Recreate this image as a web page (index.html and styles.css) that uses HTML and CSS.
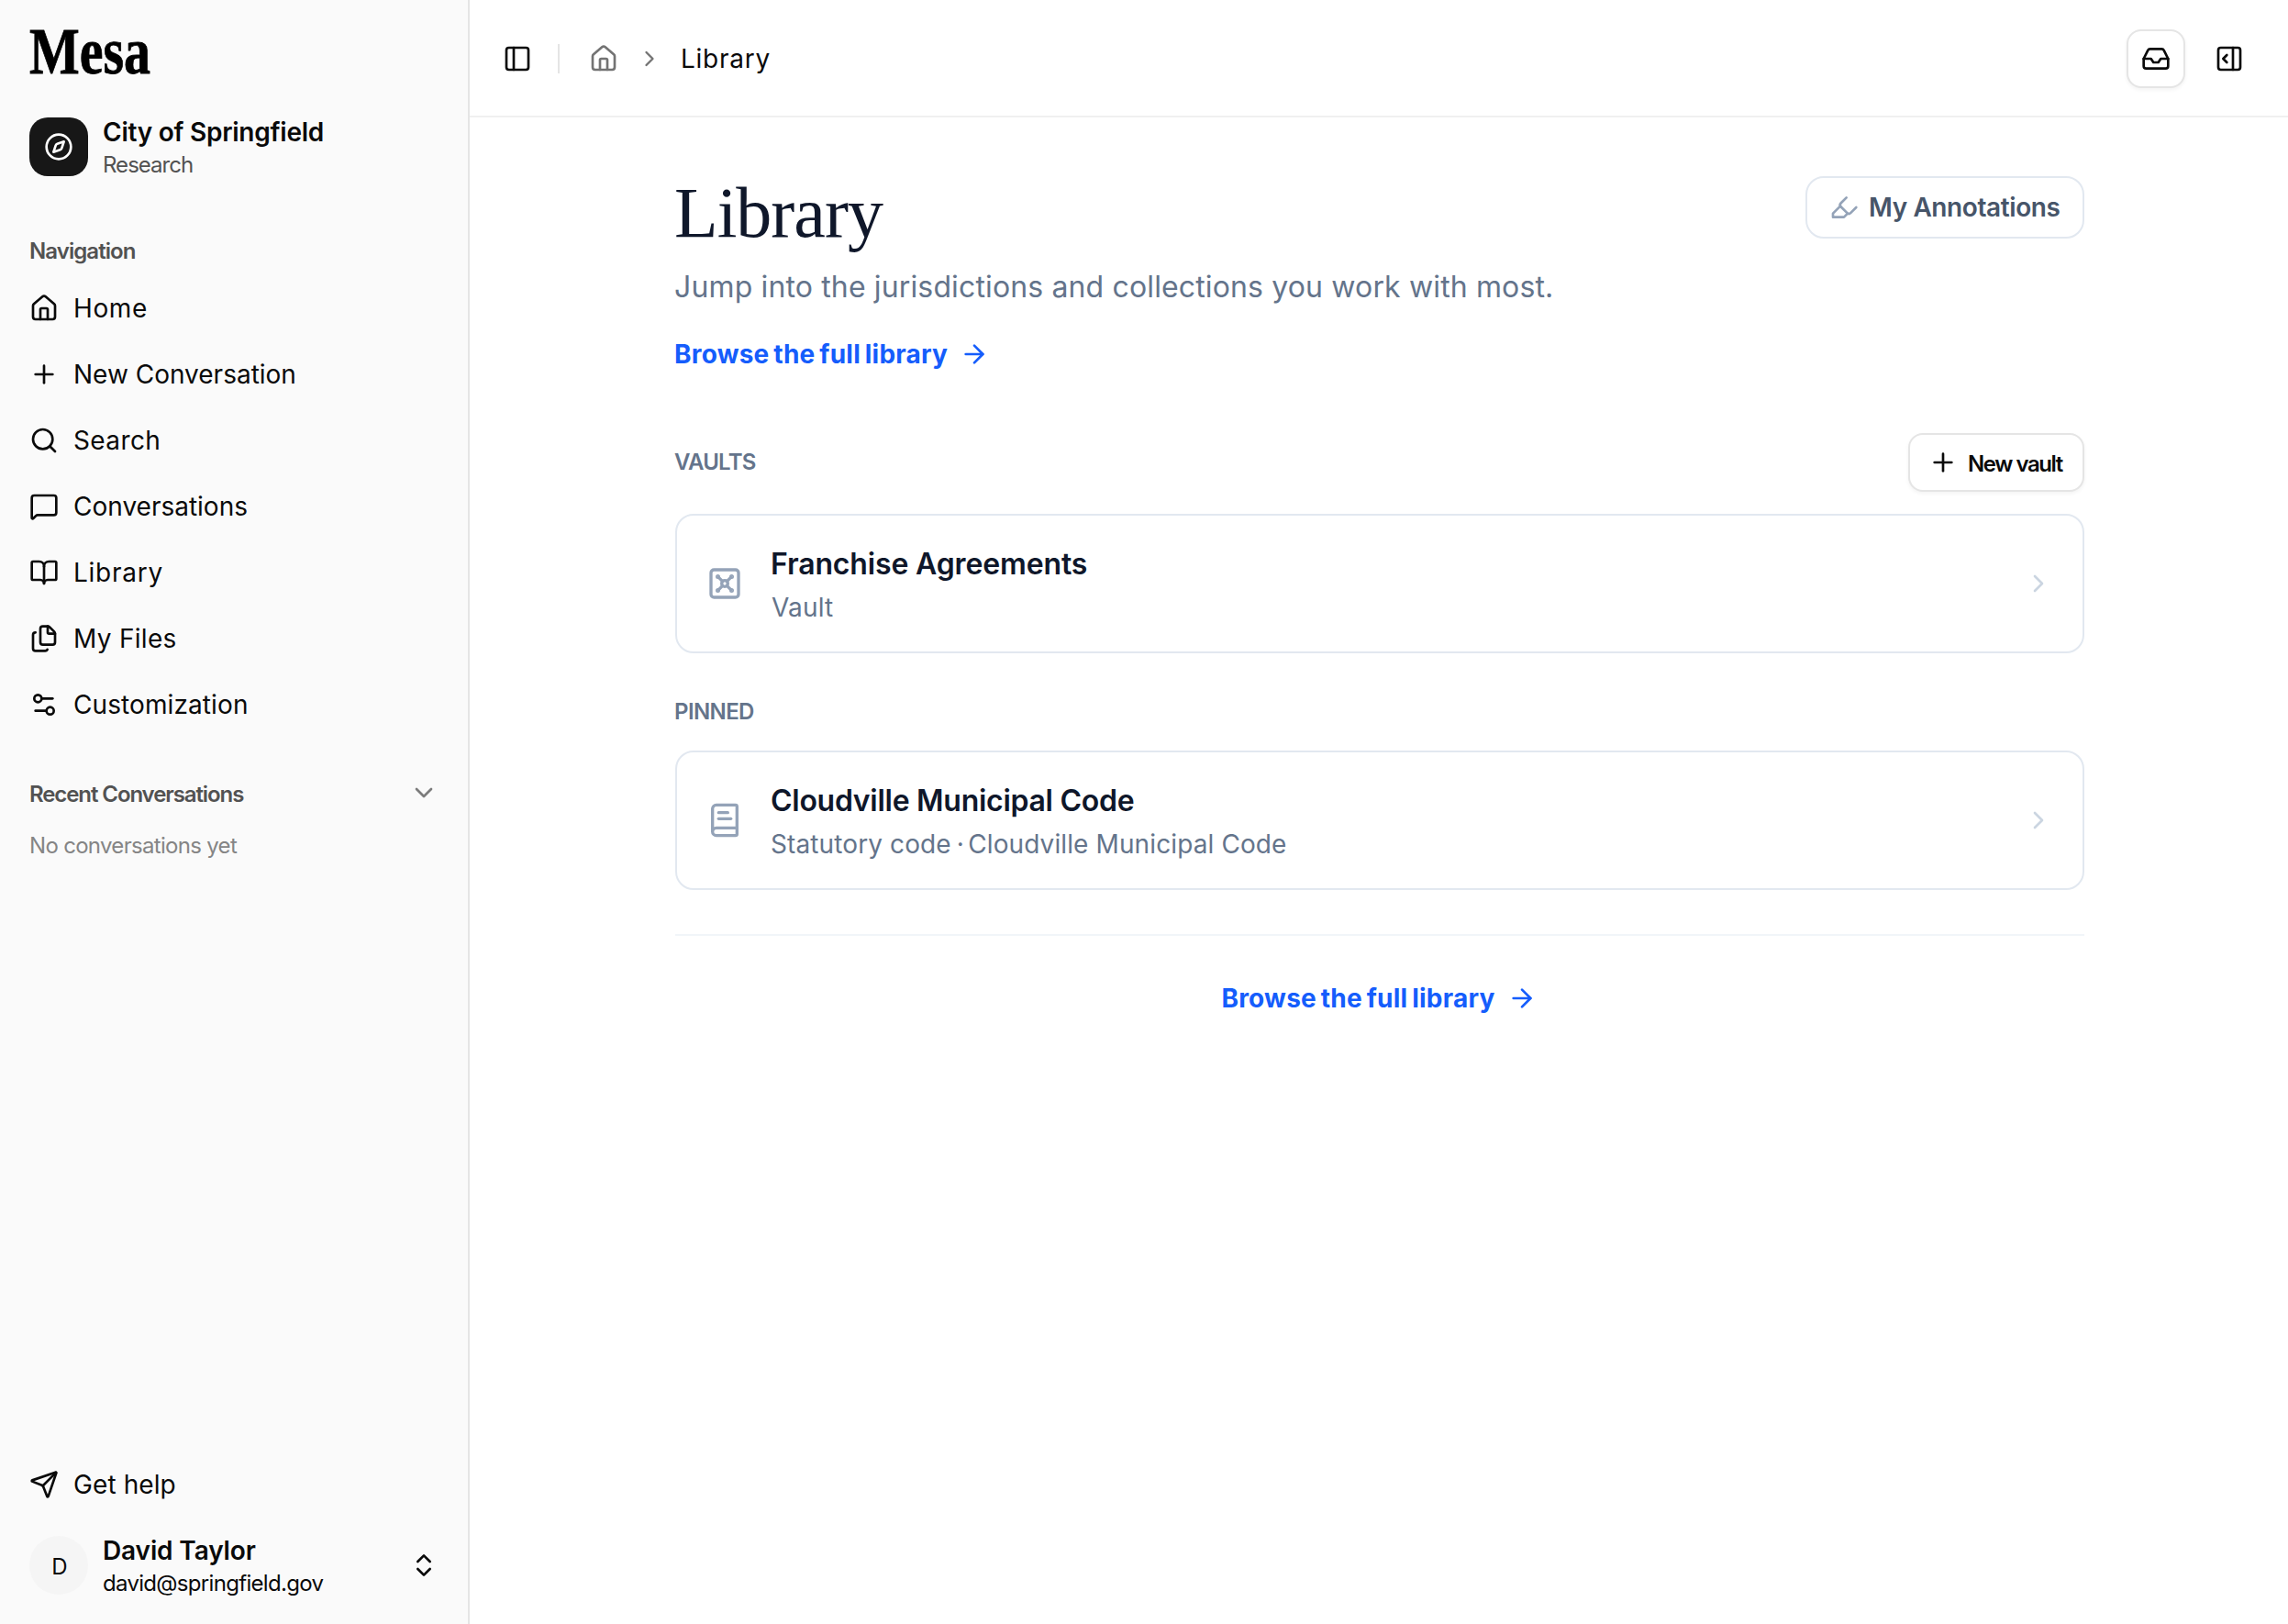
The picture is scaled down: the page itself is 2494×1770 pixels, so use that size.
FILE: index.html
```html
<!DOCTYPE html>
<html lang="en">
<head>
<meta charset="utf-8">
<title>Library</title>
<link rel="stylesheet" href="styles.css">
</head>
<body>
<div class="app">
  <aside class="sidebar">
    <div class="brand"><span class="brand-name">Mesa</span></div>

    <div class="identity org">
      <div class="org-badge">
        <svg class="icon" viewBox="0 0 24 24"><circle cx="12" cy="12" r="10"/><path d="m16.24 7.76-1.804 5.411a2 2 0 0 1-1.265 1.265L7.76 16.24l1.804-5.411a2 2 0 0 1 1.265-1.265z"/></svg>
      </div>
      <div class="identity-text">
        <div class="identity-name">City of Springfield</div>
        <div class="identity-sub muted research">Research</div>
      </div>
    </div>

    <div class="group-label nav-label">Navigation</div>
    <nav class="nav">
      <a class="nav-item home"><svg class="icon" viewBox="0 0 24 24"><path d="M15 21v-8a1 1 0 0 0-1-1h-4a1 1 0 0 0-1 1v8"/><path d="M3 10a2 2 0 0 1 .709-1.528l7-6a2 2 0 0 1 2.582 0l7 6A2 2 0 0 1 21 10v9a2 2 0 0 1-2 2H5a2 2 0 0 1-2-2z"/></svg><span>Home</span></a>
      <a class="nav-item"><svg class="icon" viewBox="0 0 24 24"><path d="M5 12h14"/><path d="M12 5v14"/></svg><span>New Conversation</span></a>
      <a class="nav-item search"><svg class="icon" viewBox="0 0 24 24"><circle cx="11" cy="11" r="8"/><path d="m21 21-4.34-4.34"/></svg><span>Search</span></a>
      <a class="nav-item"><svg class="icon" viewBox="0 0 24 24"><path d="M22 17a2 2 0 0 1-2 2H6.828a2 2 0 0 0-1.414.586l-2.202 2.202A.71.71 0 0 1 2 21.286V5a2 2 0 0 1 2-2h16a2 2 0 0 1 2 2z"/></svg><span>Conversations</span></a>
      <a class="nav-item library"><svg class="icon" viewBox="0 0 24 24"><path d="M12 7v14"/><path d="M3 18a1 1 0 0 1-1-1V4a1 1 0 0 1 1-1h5a4 4 0 0 1 4 4 4 4 0 0 1 4-4h5a1 1 0 0 1 1 1v13a1 1 0 0 1-1 1h-6a3 3 0 0 0-3 3 3 3 0 0 0-3-3z"/></svg><span>Library</span></a>
      <a class="nav-item files"><svg class="icon" viewBox="0 0 24 24"><path d="M15 2h-4a2 2 0 0 0-2 2v11a2 2 0 0 0 2 2h8a2 2 0 0 0 2-2V8"/><path d="M16.706 2.706A2.4 2.4 0 0 0 15 2v5a1 1 0 0 0 1 1h5a2.4 2.4 0 0 0-.706-1.706z"/><path d="M5 7a2 2 0 0 0-2 2v11a2 2 0 0 0 2 2h8a2 2 0 0 0 1.732-1"/></svg><span>My Files</span></a>
      <a class="nav-item customization"><svg class="icon" viewBox="0 0 24 24"><path d="M14 17H5"/><path d="M19 7h-9"/><circle cx="17" cy="17" r="3"/><circle cx="7" cy="7" r="3"/></svg><span>Customization</span></a>
    </nav>

    <div class="recent">
      <span class="group-label recent-label">Recent Conversations</span>
      <svg class="icon" viewBox="0 0 24 24"><path d="m6 9 6 6 6-6"/></svg>
    </div>
    <div class="empty">No conversations yet</div>

    <div class="sidebar-foot">
      <a class="nav-item help"><svg class="icon" viewBox="0 0 24 24"><path d="M14.536 21.686a.5.5 0 0 0 .937-.024l6.5-19a.496.496 0 0 0-.635-.635l-19 6.5a.5.5 0 0 0-.024.937l7.93 3.18a2 2 0 0 1 1.112 1.11z"/><path d="m21.854 2.147-10.94 10.939"/></svg><span>Get help</span></a>
      <div class="identity user">
        <div class="avatar">D</div>
        <div class="identity-text">
          <div class="identity-name">David Taylor</div>
          <div class="identity-sub">david@springfield.gov</div>
        </div>
        <svg class="icon" viewBox="0 0 24 24"><path d="m7 15 5 5 5-5"/><path d="m7 9 5-5 5 5"/></svg>
      </div>
    </div>
  </aside>

  <div class="page">
    <header class="topbar">
      <svg class="icon" viewBox="0 0 24 24"><rect width="18" height="18" x="3" y="3" rx="2"/><path d="M9 3v18"/></svg>
      <span class="divider"></span>
      <svg class="icon gray" viewBox="0 0 24 24"><path d="M15 21v-8a1 1 0 0 0-1-1h-4a1 1 0 0 0-1 1v8"/><path d="M3 10a2 2 0 0 1 .709-1.528l7-6a2 2 0 0 1 2.582 0l7 6A2 2 0 0 1 21 10v9a2 2 0 0 1-2 2H5a2 2 0 0 1-2-2z"/></svg>
      <svg class="icon gray crumb-sep" viewBox="0 0 24 24"><path d="m9 18 6-6-6-6"/></svg>
      <span class="crumb">Library</span>
      <div class="topbar-actions">
        <button class="icon-button outlined"><svg class="icon" viewBox="0 0 24 24"><path d="M22 12h-6l-2 3h-4l-2-3H2"/><path d="M5.45 5.11 2 12v6a2 2 0 0 0 2 2h16a2 2 0 0 0 2-2v-6l-3.45-6.89A2 2 0 0 0 16.76 4H7.24a2 2 0 0 0-1.79 1.11z"/></svg></button>
        <button class="icon-button"><svg class="icon" viewBox="0 0 24 24"><rect width="18" height="18" x="3" y="3" rx="2"/><path d="M15 3v18"/><path d="m10 15-3-3 3-3"/></svg></button>
      </div>
    </header>

    <main class="content">
      <div class="intro">
        <div>
          <h1>Library</h1>
          <p class="lede">Jump into the jurisdictions and collections you work with most.</p>
          <a class="link">Browse the full library<svg class="icon" viewBox="0 0 24 24"><path d="M5 12h14"/><path d="m12 5 7 7-7 7"/></svg></a>
        </div>
        <button class="annotations"><svg class="icon" viewBox="0 0 24 24"><path d="m9 11-6 6v3h9l3-3"/><path d="m22 12-4.6 4.6a2 2 0 0 1-2.8 0l-5.2-5.2a2 2 0 0 1 0-2.8L14 4"/></svg><span>My Annotations</span></button>
      </div>

      <div class="section-head">
        <h2 class="vaults">VAULTS</h2>
        <button class="new-vault"><svg class="icon" viewBox="0 0 24 24"><path d="M5 12h14"/><path d="M12 5v14"/></svg><span>New vault</span></button>
      </div>
      <a class="card">
        <svg class="icon card-icon" viewBox="0 0 24 24"><rect width="18" height="18" x="3" y="3" rx="2"/><circle cx="7.5" cy="7.5" r=".5" fill="currentColor"/><path d="m7.9 7.9 2.7 2.7"/><circle cx="16.5" cy="7.5" r=".5" fill="currentColor"/><path d="m13.4 10.6 2.7-2.7"/><circle cx="7.5" cy="16.5" r=".5" fill="currentColor"/><path d="m7.9 16.1 2.7-2.7"/><circle cx="16.5" cy="16.5" r=".5" fill="currentColor"/><path d="m13.4 13.4 2.7 2.7"/><circle cx="12" cy="12" r="2"/></svg>
        <div class="card-text">
          <div class="card-title">Franchise Agreements</div>
          <div class="card-sub">Vault</div>
        </div>
        <svg class="icon card-chevron" viewBox="0 0 24 24"><path d="m9 18 6-6-6-6"/></svg>
      </a>

      <h2 class="pinned">PINNED</h2>
      <a class="card">
        <svg class="icon card-icon" viewBox="0 0 24 24"><path d="M4 19.5v-15A2.5 2.5 0 0 1 6.5 2H19a1 1 0 0 1 1 1v18a1 1 0 0 1-1 1H6.5a1 1 0 0 1 0-5H20"/><path d="M8 11h8"/><path d="M8 7h6"/></svg>
        <div class="card-text">
          <div class="card-title code">Cloudville Municipal Code</div>
          <div class="card-sub source">Statutory code<span class="dot"> · </span>Cloudville Municipal Code</div>
        </div>
        <svg class="icon card-chevron" viewBox="0 0 24 24"><path d="m9 18 6-6-6-6"/></svg>
      </a>

      <div class="more">
        <a class="link">Browse the full library<svg class="icon" viewBox="0 0 24 24"><path d="M5 12h14"/><path d="m12 5 7 7-7 7"/></svg></a>
      </div>
    </main>
  </div>
</div>
</body>
</html>
```
FILE: styles.css
```css
* { box-sizing: border-box; margin: 0; padding: 0; }

body {
  font-family: Inter, "Liberation Sans", sans-serif;
  font-size: 28px;
  line-height: 40px;
  color: #0a0a0a;
  background: #fff;
}

button { font: inherit; color: inherit; background: #fff; border: 0; }

.icon {
  display: block;
  flex: none;
  width: 32px;
  height: 32px;
  fill: none;
  stroke: currentColor;
  stroke-width: 2;
  stroke-linecap: round;
  stroke-linejoin: round;
}

.app { display: flex; height: 1770px; }

/* Sidebar */
.sidebar {
  display: flex;
  flex-direction: column;
  flex: none;
  width: 512px;
  padding: 16px 32px 32px;
  background: #fafafa;
  border-right: 2px solid #e5e5e5;
}

.brand {
  height: 78px;
  font: 700 71px/80px "Liberation Serif", serif;
  color: #000;
}
.brand-name {
  display: inline-block;
  transform: scaleX(.816);
  transform-origin: left;
  -webkit-text-stroke: .8px #000;
}

.identity { display: flex; align-items: center; height: 64px; }
.org { margin-top: 34px; }
.org-badge, .avatar {
  display: flex;
  align-items: center;
  justify-content: center;
  flex: none;
  width: 64px;
  height: 64px;
}
.org-badge { border-radius: 20px; background: #171717; color: #fff; }
.avatar { padding: 3px 0 0 2px; border-radius: 50%; background: #f5f5f5; font-size: 24px; }
.identity-text { flex: 1; margin-left: 16px; padding-top: 5px; }
.identity-name { font-weight: 600; line-height: 35px; letter-spacing: -.25px; }
.identity-sub { font-size: 24px; line-height: 36px; letter-spacing: -.69px; }
.user .identity-name { letter-spacing: -.13px; }
.muted { color: #525252; }
.research { letter-spacing: -.97px; }

.group-label { font-size: 24px; font-weight: 600; line-height: 32px; color: #525252; }
.nav-label { margin: 66px 0 14px; letter-spacing: -.93px; }

.nav { display: flex; flex-direction: column; gap: 8px; }
.nav-item { display: flex; align-items: center; gap: 16px; height: 64px; }
.home { letter-spacing: .6px; }
.search { letter-spacing: .4px; }
.library { letter-spacing: .75px; }
.files { letter-spacing: .3px; }
.customization, .help { letter-spacing: .1px; }

.recent {
  display: flex;
  align-items: center;
  justify-content: space-between;
  height: 32px;
  margin-top: 48px;
  color: #7c7c7c;
}
.recent-label { padding-top: 4px; letter-spacing: -1.09px; }
.empty { margin-top: 26px; font-size: 24px; line-height: 32px; letter-spacing: -.69px; color: #858585; }

.sidebar-foot { display: flex; flex-direction: column; gap: 24px; margin-top: auto; }

/* Top bar */
.page { flex: 1; min-width: 0; }
.topbar {
  display: flex;
  align-items: center;
  height: 128px;
  padding: 2px 32px 0 36px;
  border-bottom: 2px solid #f0f0f0;
}
.divider { width: 2px; height: 32px; margin: 0 32px 0 28px; background: #e5e5e5; }
.gray { color: #737373; }
.crumb-sep { width: 28px; height: 28px; margin: 0 20px; }
.crumb { letter-spacing: .75px; }
.topbar-actions { display: flex; gap: 16px; margin-left: auto; }
.icon-button {
  display: flex;
  align-items: center;
  justify-content: center;
  width: 64px;
  height: 64px;
  border-radius: 16px;
}
.outlined, .new-vault { border: 2px solid #e5e5e5; box-shadow: 0 2px 4px rgba(0, 0, 0, .05); }

/* Content */
.content { width: 1536px; margin-left: 224px; padding-top: 64px; }
.intro { display: flex; align-items: flex-start; justify-content: space-between; }
h1 {
  margin-left: -1px;
  font: 400 78px/80px "Liberation Serif", serif;
  letter-spacing: -1px;
  color: #0f172a;
}
.lede { margin: 17px 0 0 -1px; font-size: 32px; line-height: 48px; letter-spacing: .14px; color: #64748b; }
.link {
  display: flex;
  align-items: center;
  gap: 13px;
  font-weight: 700;
  letter-spacing: .22px;
  word-spacing: -2px;
  color: #155dfc;
}
.intro .link { margin: 29px 0 0 -1px; }

.annotations {
  display: flex;
  align-items: center;
  gap: 11px;
  width: 304px;
  height: 68px;
  padding-left: 24px;
  border: 2px solid #e2e8f0;
  border-radius: 20px;
  font-weight: 600;
  letter-spacing: -.4px;
  white-space: nowrap;
  color: #475569;
}
.annotations .icon { color: #94a3b8; }

.section-head {
  display: flex;
  align-items: center;
  justify-content: space-between;
  margin: 66px 0 24px;
}
h2 { font-size: 24px; font-weight: 600; line-height: 32px; color: #64748b; }
.vaults { margin-left: -1px; letter-spacing: -.75px; }
.pinned { margin: 48px 0 26px -1px; letter-spacing: -.6px; }
.new-vault {
  display: flex;
  align-items: center;
  gap: 10px;
  width: 192px;
  height: 64px;
  padding-left: 20px;
  border-radius: 16px;
  font-size: 24px;
  font-weight: 600;
  letter-spacing: -1.45px;
  white-space: nowrap;
}
.new-vault span { padding: 3px 0 0 1px; }

.card {
  display: flex;
  align-items: center;
  gap: 30px;
  height: 152px;
  padding: 0 32px;
  border: 2px solid #e2e8f0;
  border-radius: 20px;
}
.card-icon { width: 40px; height: 40px; color: #94a3b8; }
.card-text { flex: 1; padding-top: 1px; }
.card-title { font-size: 32px; font-weight: 600; line-height: 48px; letter-spacing: -.15px; color: #0f172a; }
.card-title.code { letter-spacing: -.28px; }
.card-sub { margin: 3px 0 0 1px; letter-spacing: .15px; color: #64748b; }
.source { margin-left: 0; letter-spacing: .11px; }
.dot { letter-spacing: -1.8px; }
.card-chevron { color: #cbd5e1; }

.more {
  display: flex;
  justify-content: center;
  margin-top: 48px;
  padding: 48px 2px 0 0;
  border-top: 2px solid #f1f5f9;
}
```
